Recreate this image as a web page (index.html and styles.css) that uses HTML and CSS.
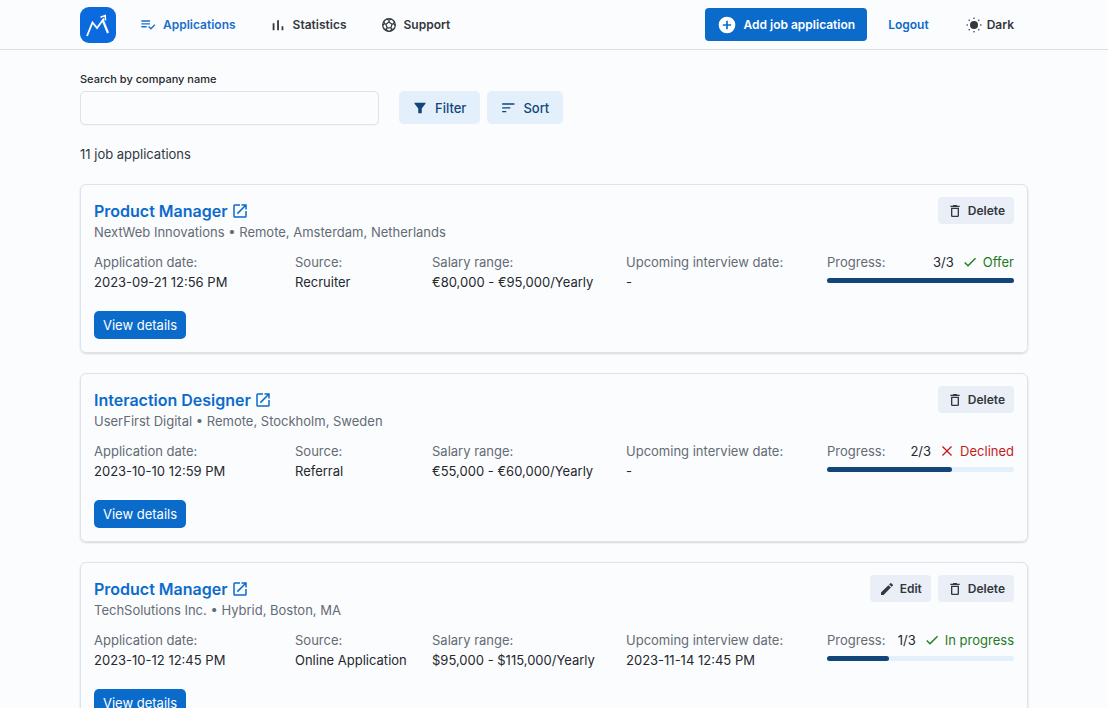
FILE: index.html
```html
<!DOCTYPE html>
<html lang="en">
<head>
<meta charset="utf-8">
<meta name="viewport" content="width=device-width, initial-scale=1">
<title>Job applications</title>
<link rel="stylesheet" href="styles.css">
</head>
<body>
<svg class="sprite" aria-hidden="true">
  <symbol id="i-list" viewBox="0 0 24 24"><path d="M2 5h13v2H2zM2 9.300h13v2H2zM2 13.600h8v2H2zM21.600 11l1.400 1.400-6.700 6.700-4.200-4.200 1.400-1.400 2.800 2.800z"/></symbol>
  <symbol id="i-bars" viewBox="0 0 24 24"><path d="M4 9.500h2.700V20H4zM10.700 5h2.700v15h-2.700zM17.400 14H20v6h-2.600z"/></symbol>
  <symbol id="i-ball" viewBox="0 0 24 24"><g fill="none" stroke="currentColor" stroke-width="1.800" stroke-linejoin="round"><circle cx="12" cy="12" r="9.500"/><path d="M12 7.500l4.600 3.300-1.800 5.400H9.200l-1.800-5.400zM12 7.500V5M8 3l4 2 4-2M16.600 10.800l2.500-.8M21.500 13L19 10l.8-4M14.800 16.200l1.600 2.200M13 21.500l3.400-3.100 3.500-.4M9.200 16.200l-1.600 2.200M11 21.500l-3.400-3.100-3.500-.4M7.400 10.800L4.900 10M2.500 13L5 10l-.8-4"/></g></symbol>
  <symbol id="i-add" viewBox="0 0 24 24"><path d="M12 2a10 10 0 1 0 0 20 10 10 0 0 0 0-20zm5 11h-4v4h-2v-4H7v-2h4V7h2v4h4z"/></symbol>
  <symbol id="i-sun" viewBox="0 0 24 24"><circle cx="12" cy="12" r="6"/><circle cx="12" cy="1.800" r="1.200"/><circle cx="12" cy="22.200" r="1.200"/><circle cx="1.800" cy="12" r="1.200"/><circle cx="22.200" cy="12" r="1.200"/><circle cx="4.800" cy="4.800" r="1.200"/><circle cx="19.200" cy="4.800" r="1.200"/><circle cx="4.800" cy="19.200" r="1.200"/><circle cx="19.200" cy="19.200" r="1.200"/></symbol>
  <symbol id="i-filter" viewBox="0 0 24 24"><path d="M3.500 3h17c.9 0 1.300 1 .8 1.700L15 13v7a1 1 0 0 1-1 1h-4a1 1 0 0 1-1-1v-7L2.700 4.700C2.200 4 2.600 3 3.500 3z"/></symbol>
  <symbol id="i-sort" viewBox="0 0 24 24"><path d="M2 4h21v2.400H2zM2 10.500h14v2.400H2zM2 17h7v2.400H2z"/></symbol>
  <symbol id="i-open" viewBox="0 0 24 24"><path d="M19 19H5V5h7V3H5a2 2 0 0 0-2 2v14a2 2 0 0 0 2 2h14a2 2 0 0 0 2-2v-7h-2zM14 3v2h3.600l-9.800 9.800 1.400 1.400L19 6.400V10h2V3z"/></symbol>
  <symbol id="i-trash" viewBox="0 0 24 24"><path d="M6 19a2 2 0 0 0 2 2h8a2 2 0 0 0 2-2V7H6zM8 9h8v10H8zM15.500 4l-1-1h-5l-1 1H5v2h14V4z"/></symbol>
  <symbol id="i-edit" viewBox="0 0 24 24"><path d="M3 17.200V21h3.800L17.800 9.900l-3.700-3.700zM20.700 7a1 1 0 0 0 0-1.400l-2.300-2.300a1 1 0 0 0-1.400 0l-1.800 1.800 3.700 3.700z"/></symbol>
  <symbol id="i-check" viewBox="0 0 24 24"><path d="M9 16.200L4.800 12l-1.400 1.400L9 19 21 7l-1.400-1.400z"/></symbol>
  <symbol id="i-cross" viewBox="0 0 24 24"><path d="M19.500 5.900L18.100 4.500 12 10.600 5.900 4.500 4.500 5.900l6.100 6.100-6.100 6.100 1.400 1.400 6.100-6.100 6.100 6.100 1.400-1.400-6.100-6.100z"/></symbol>
</svg>

<header class="topbar">
  <a class="logo" href="#" aria-label="Home">
    <svg viewBox="0 0 36 36"><g fill="none" stroke="currentColor" stroke-linejoin="miter"><path d="M7 29L12.500 15.500 17 21 24 11.500" stroke-width="1.800"/><path d="M22.500 12.500L28 26" stroke-width="2.200"/><path d="M20.500 10.300L25.200 8.500 25.500 13.500" stroke-width="1.500"/></g></svg>
  </a>
  <nav class="nav">
    <a class="nav-link active" href="#"><svg class="icon"><use href="#i-list"/></svg>Applications</a>
    <a class="nav-link" href="#"><svg class="icon"><use href="#i-bars"/></svg>Statistics</a>
    <a class="nav-link" href="#"><svg class="icon"><use href="#i-ball"/></svg>Support</a>
  </nav>
  <div class="account">
    <button class="add" type="button"><svg class="icon-lg"><use href="#i-add"/></svg>Add job application</button>
    <button class="plain logout" type="button">Logout</button>
    <button class="plain theme" type="button"><svg class="icon"><use href="#i-sun"/></svg>Dark</button>
  </div>
</header>

<main class="page">
  <form class="search">
    <label class="search-label" for="company">Search by company name</label>
    <div class="search-row">
      <input class="search-input" id="company" type="text">
      <div class="tools">
        <button class="tool" type="button"><svg class="icon-sm"><use href="#i-filter"/></svg>Filter</button>
        <button class="tool" type="button"><svg class="icon-sm"><use href="#i-sort"/></svg>Sort</button>
      </div>
    </div>
  </form>
  <p class="count">11 job applications</p>

  <div class="cards">
    <article class="card">
      <div class="card-head">
        <h2 class="title"><a href="#">Product Manager<svg class="icon-md"><use href="#i-open"/></svg></a></h2>
        <div class="actions">
          <button class="action" type="button"><svg class="icon"><use href="#i-trash"/></svg>Delete</button>
        </div>
      </div>
      <p class="company">NextWeb Innovations • Remote, Amsterdam, Netherlands</p>
      <dl class="facts">
        <div><dt>Application date:</dt><dd>2023-09-21 12:56 PM</dd></div>
        <div><dt>Source:</dt><dd>Recruiter</dd></div>
        <div><dt>Salary range:</dt><dd>€80,000 - €95,000/Yearly</dd></div>
        <div><dt>Upcoming interview date:</dt><dd>-</dd></div>
        <div class="progress">
          <dt>Progress:</dt>
          <dd class="state"><span>3/3</span><span class="status good"><svg class="icon"><use href="#i-check"/></svg>Offer</span></dd>
          <dd class="track"><div class="fill" style="width: 100%"></div></dd>
        </div>
      </dl>
      <button class="details" type="button">View details</button>
    </article>

    <article class="card">
      <div class="card-head">
        <h2 class="title"><a href="#">Interaction Designer<svg class="icon-md"><use href="#i-open"/></svg></a></h2>
        <div class="actions">
          <button class="action" type="button"><svg class="icon"><use href="#i-trash"/></svg>Delete</button>
        </div>
      </div>
      <p class="company">UserFirst Digital • Remote, Stockholm, Sweden</p>
      <dl class="facts">
        <div><dt>Application date:</dt><dd>2023-10-10 12:59 PM</dd></div>
        <div><dt>Source:</dt><dd>Referral</dd></div>
        <div><dt>Salary range:</dt><dd>€55,000 - €60,000/Yearly</dd></div>
        <div><dt>Upcoming interview date:</dt><dd>-</dd></div>
        <div class="progress">
          <dt>Progress:</dt>
          <dd class="state"><span>2/3</span><span class="status bad"><svg class="icon"><use href="#i-cross"/></svg>Declined</span></dd>
          <dd class="track"><div class="fill" style="width: 66.67%"></div></dd>
        </div>
      </dl>
      <button class="details" type="button">View details</button>
    </article>

    <article class="card">
      <div class="card-head">
        <h2 class="title"><a href="#">Product Manager<svg class="icon-md"><use href="#i-open"/></svg></a></h2>
        <div class="actions">
          <button class="action" type="button"><svg class="icon"><use href="#i-edit"/></svg>Edit</button>
          <button class="action" type="button"><svg class="icon"><use href="#i-trash"/></svg>Delete</button>
        </div>
      </div>
      <p class="company">TechSolutions Inc. • Hybrid, Boston, MA</p>
      <dl class="facts">
        <div><dt>Application date:</dt><dd>2023-10-12 12:45 PM</dd></div>
        <div><dt>Source:</dt><dd>Online Application</dd></div>
        <div><dt>Salary range:</dt><dd>$95,000 - $115,000/Yearly</dd></div>
        <div><dt>Upcoming interview date:</dt><dd>2023-11-14 12:45 PM</dd></div>
        <div class="progress">
          <dt>Progress:</dt>
          <dd class="state"><span>1/3</span><span class="status good"><svg class="icon"><use href="#i-check"/></svg>In progress</span></dd>
          <dd class="track"><div class="fill" style="width: 33.33%"></div></dd>
        </div>
      </dl>
      <button class="details" type="button">View details</button>
    </article>
  </div>
</main>
</body>
</html>
```
FILE: styles.css
```css
* { box-sizing: border-box; }
html { scrollbar-width: none; }
body {
  margin: 0;
  background: #fbfcfe;
  color: #25282d;
  font-family: Inter, "Liberation Sans", sans-serif;
  font-size: 13px;
  line-height: 20px;
}
h2, p, dl, dd { margin: 0; }
a { color: inherit; text-decoration: none; }
button {
  display: inline-flex;
  align-items: center;
  border: 0;
  font: inherit;
  color: inherit;
  cursor: pointer;
  white-space: nowrap;
}
svg { fill: currentColor; flex: none; }
.sprite { position: absolute; width: 0; height: 0; }
.icon-sm { width: 14px; height: 14px; }
.icon { width: 16px; height: 16px; }
.icon-md { width: 18px; height: 18px; }
.icon-lg { width: 20px; height: 20px; }

.topbar {
  display: flex;
  align-items: center;
  height: 50px;
  padding: 0 80px;
  border-bottom: 1px solid #dcdfe3;
  color: #32383e;
  font-size: 12px;
  font-weight: 600;
}
.logo {
  width: 36px;
  height: 36px;
  border-radius: 9px;
  background: #0b6bde;
  color: #fff;
}
.logo svg { display: block; width: 36px; height: 36px; }
.nav { display: flex; gap: 34px; margin-left: 24px; }
.nav-link { display: flex; align-items: center; gap: 7px; }
.active { color: #1a6fca; }
.account { display: flex; align-items: center; margin-left: auto; }
.add {
  height: 33px;
  padding: 0 12px;
  gap: 6px;
  border-radius: 4px;
  background: #0b6bcb;
  color: #fff;
}
.plain { background: none; padding: 0; }
.logout { margin-left: 21px; color: #0b6bcb; }
.theme { gap: 5px; margin: 0 14px 0 37px; }

.page { padding: 19px 80px 20px; }
.search-label { display: block; font-size: 11px; font-weight: 500; }
.search-row { display: flex; gap: 20px; margin-top: 2px; }
.search-input {
  width: 299px;
  height: 34px;
  padding: 0 10px;
  border: 1px solid #dde3ea;
  border-radius: 5px;
  background: #fbfcfe;
  box-shadow: 0 1px 1px #15151808;
  font: inherit;
}
.tools { display: flex; gap: 7px; }
.tool {
  height: 33px;
  padding: 0 14px;
  gap: 8px;
  border-radius: 5px;
  background: #e3effb;
  color: #12467b;
  font-weight: 500;
}
.count { margin-top: 19px; color: #32383e; }

.cards { display: flex; flex-direction: column; gap: 20px; margin-top: 20px; }
.card {
  padding: 12px 13px 13px;
  border: 1px solid #dde3ea;
  border-radius: 6px;
  box-shadow: 0 1px 2px #15151826;
}
.card-head { display: flex; align-items: center; justify-content: space-between; height: 27px; }
.title { font-size: 16px; font-weight: 600; line-height: 24px; color: #0b6bcb; }
.title a { display: flex; align-items: center; gap: 3px; }
.actions { display: flex; gap: 7px; }
.action {
  height: 27px;
  padding: 0 9px;
  gap: 5px;
  border-radius: 4px;
  background: #eaeef6;
  color: #32383e;
  font-size: 12px;
  font-weight: 600;
}
.company { margin-top: -2px; color: #636b74; }
.facts {
  display: grid;
  grid-template-columns: 201fr 137fr 194fr 201fr 187fr;
  margin-top: 10px;
}
dt { color: #636b74; }
.progress { display: grid; grid-template-columns: auto 1fr; align-content: start; }
.state { display: flex; justify-content: flex-end; gap: 8px; }
.status { display: flex; align-items: center; gap: 5px; }
.good { color: #1f7a1f; }
.bad { color: #c41c1c; }
.track {
  grid-column: 1 / -1;
  height: 5px;
  margin-top: 6px;
  border-radius: 3px;
  background: #e3effb;
}
.fill { height: 100%; border-radius: 3px; background: #12467b; }
.details {
  height: 28px;
  margin-top: 19px;
  padding: 0 9px;
  border-radius: 5px;
  background: #0b6bcb;
  color: #fff;
}
```
